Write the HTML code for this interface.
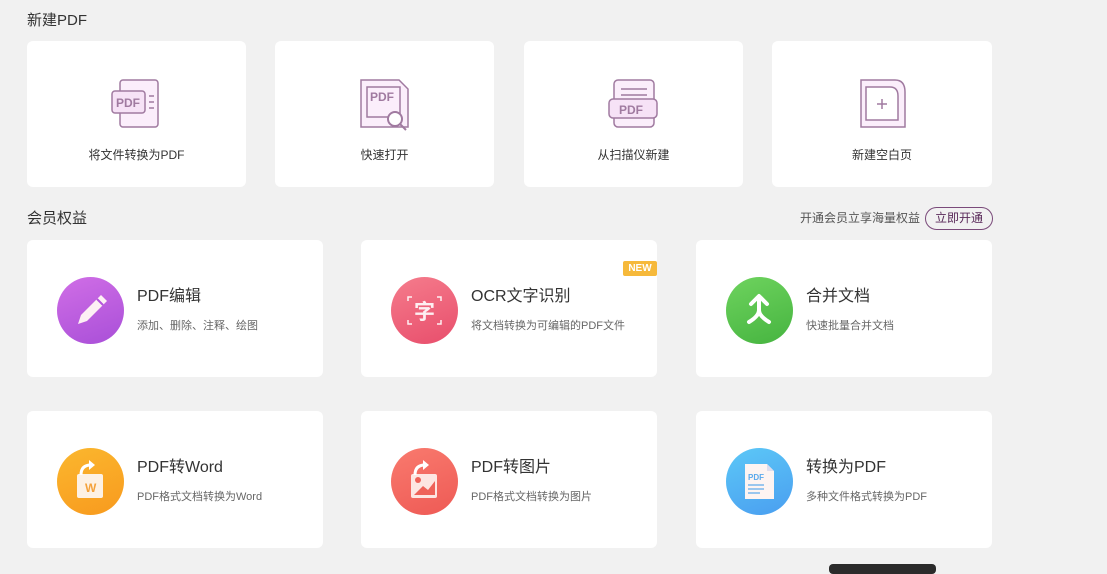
<!DOCTYPE html>
<html><head><meta charset="utf-8"><style>
*{margin:0;padding:0;box-sizing:border-box}
body{width:1107px;height:569px;background:#f1f1f1;font-family:"Liberation Sans","Noto Sans CJK SC",sans-serif;position:relative;overflow:hidden;color:#333}
.h{position:absolute;font-size:15px;color:#333}
.c{position:absolute;background:#fff;border-radius:6px}
.t{position:absolute;width:100%;text-align:center;top:105px;font-size:12px;color:#333}
.ic{position:absolute;left:50%;top:38px;transform:translateX(-50%)}
.m{position:absolute;background:#fff;border-radius:6px;width:296px}
.circ{position:absolute;left:30px;width:67px;height:67px;border-radius:50%;top:37px}
.mt{position:absolute;left:110px;top:42px;font-size:16px;color:#333}
.md{position:absolute;left:110px;top:77px;font-size:11px;color:#666}
</style></head><body>
<div class="h" style="left:27px;top:9px">新建PDF</div>

<div class="c" style="left:27px;top:41px;width:219px;height:146px">
<svg class="ic" width="52" height="52" viewBox="0 0 52 52" fill="none" stroke="#a07aa0" stroke-width="1.5"><rect x="9" y="1" width="38" height="47" rx="3" fill="#fbeefb"/><rect x="1" y="12" width="33" height="22" rx="3" fill="#f6e2f6"/><text x="5" y="28" font-family="Liberation Sans" font-weight="bold" font-size="12" fill="#a07aa0" stroke="none">PDF</text><path d="M38 17h5M38 23h5M38 29h5"/></svg>
<div class="t">将文件转换为PDF</div></div>

<div class="c" style="left:275px;top:41px;width:219px;height:146px">
<svg class="ic" width="52" height="52" viewBox="0 0 52 52" fill="none" stroke="#a07aa0" stroke-width="1.5"><path d="M2 1h38l9 9v38H2z" fill="#fbeefb"/><rect x="8" y="8" width="33" height="30" fill="#fbeefb"/><text x="11" y="22" font-family="Liberation Sans" font-weight="bold" font-size="12" fill="#a07aa0" stroke="none">PDF</text><circle cx="36" cy="40" r="7" fill="#fff" stroke-width="2"/><path d="M41 45l6 6" stroke-width="2"/></svg>
<div class="t">快速打开</div></div>

<div class="c" style="left:524px;top:41px;width:219px;height:146px">
<svg class="ic" width="52" height="52" viewBox="0 0 52 52" fill="none" stroke="#a07aa0" stroke-width="1.5"><rect x="6" y="1" width="40" height="47" rx="4" fill="#fbeefb"/><path d="M13 10h26M13 16h26"/><rect x="1" y="20" width="48" height="19" rx="4" fill="#f6e2f6"/><text x="11" y="35" font-family="Liberation Sans" font-weight="bold" font-size="12" fill="#a07aa0" stroke="none">PDF</text></svg>
<div class="t">从扫描仪新建</div></div>

<div class="c" style="left:772px;top:41px;width:220px;height:146px">
<svg class="ic" width="52" height="52" viewBox="0 0 52 52" fill="none" stroke="#a07aa0" stroke-width="1.5"><path d="M5 1h34q10 0 10 12v35H5z" fill="#fbeefb"/><path d="M10 8h24q8 0 8 9v24H10z" fill="#fff"/><path d="M26 20v10M21 25h10"/></svg>
<div class="t">新建空白页</div></div>

<div class="h" style="left:27px;top:207px">会员权益</div>
<div style="position:absolute;left:800px;top:209px;font-size:12px;color:#555">开通会员立享海量权益</div>
<div style="position:absolute;left:925px;top:207px;width:68px;height:23px;border:1.5px solid #7a4a7a;border-radius:12px;font-size:12px;color:#5a2a5a;text-align:center;line-height:20px">立即开通</div>

<div class="m" style="left:27px;top:240px;height:137px">
<div class="circ" style="background:linear-gradient(160deg,#d06ee6,#a94fd8)"><svg width="67" height="67" viewBox="0 0 67 67"><path d="M44 18l6 6-20 20-9 3 3-9z" fill="#fdf0f4"/><path d="M40 22l6 6" stroke="#b455dc" stroke-width="2"/></svg></div>
<div class="mt">PDF编辑</div><div class="md">添加、删除、注释、绘图</div></div>

<div class="m" style="left:361px;top:240px;height:137px">
<div style="position:absolute;left:262px;top:21px;width:34px;height:15px;background:#f6b93b;color:#fff;font-size:10px;font-weight:bold;text-align:center;line-height:15px;border-radius:2px">NEW</div>
<div class="circ" style="background:linear-gradient(160deg,#f57c8c,#e84e6c)"><svg width="67" height="67" viewBox="0 0 67 67" fill="none" stroke="#fff" stroke-width="1.5" opacity=".9"><path d="M17 24v-4h4M50 24v-4h-4M17 43v4h4M50 43v4h-4"/><text x="23" y="42" font-family="Noto Sans CJK SC" font-size="21" font-weight="bold" fill="#fff" stroke="none">字</text></svg></div>
<div class="mt">OCR文字识别</div><div class="md">将文档转换为可编辑的PDF文件</div></div>

<div class="m" style="left:696px;top:240px;height:137px">
<div class="circ" style="background:linear-gradient(160deg,#6ed35e,#46b440)"><svg width="67" height="67" viewBox="0 0 67 67" fill="none" stroke="#fff" stroke-width="4" stroke-linecap="round" stroke-linejoin="round"><path d="M25 27l8-8 8 8M33 20v14M23 45q10-6 10-12 0 6 10 12"/></svg></div>
<div class="mt">合并文档</div><div class="md">快速批量合并文档</div></div>

<div class="m" style="left:27px;top:411px;height:137px">
<div class="circ" style="background:linear-gradient(160deg,#fbb72e,#f89a1e)"><svg width="67" height="67" viewBox="0 0 67 67"><rect x="20" y="26" width="26" height="24" rx="2" fill="#fdf1e4"/><text x="28" y="44" font-family="Liberation Sans" font-weight="bold" font-size="12" fill="#f4a13a">W</text><path d="M24 27q0-10 10-10" stroke="#fff" stroke-width="3" fill="none"/><path d="M32 12l6 5-6 5z" fill="#fff"/></svg></div>
<div class="mt">PDF转Word</div><div class="md">PDF格式文档转换为Word</div></div>

<div class="m" style="left:361px;top:411px;height:137px">
<div class="circ" style="background:linear-gradient(160deg,#f97a6e,#ee5a55)"><svg width="67" height="67" viewBox="0 0 67 67"><rect x="20" y="26" width="26" height="24" rx="2" fill="#fde6e2"/><path d="M23 47l9-9 5 4 7-9v14z" fill="#ef6259"/><circle cx="27" cy="32" r="3" fill="#ef6259"/><path d="M24 27q0-10 10-10" stroke="#fff" stroke-width="3" fill="none"/><path d="M32 12l6 5-6 5z" fill="#fff"/></svg></div>
<div class="mt">PDF转图片</div><div class="md">PDF格式文档转换为图片</div></div>

<div class="m" style="left:696px;top:411px;height:137px">
<div class="circ" style="background:linear-gradient(160deg,#5cc8f7,#4a9ef0)"><svg width="67" height="67" viewBox="0 0 67 67"><path d="M19 16h22l7 7v28H19z" fill="#fdf4f2"/><path d="M41 16v7h7" fill="#dde" /><text x="22" y="32" font-family="Liberation Sans" font-weight="bold" font-size="8" fill="#5aa9ec">PDF</text><path d="M22 37h16M22 41h16M22 45h12" stroke="#7ab6ec" stroke-width="1.5"/></svg></div>
<div class="mt">转换为PDF</div><div class="md">多种文件格式转换为PDF</div></div>

<div style="position:absolute;left:829px;top:564px;width:107px;height:10px;background:#2b2b2b;border-radius:4px"></div>
</body></html>
